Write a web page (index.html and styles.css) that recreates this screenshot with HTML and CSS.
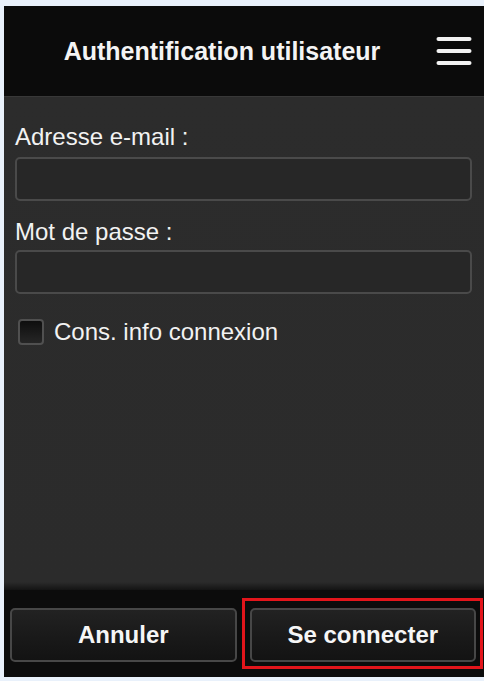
FILE: index.html
```html
<!DOCTYPE html>
<html lang="fr">
<head>
<meta charset="utf-8">
<title>Authentification utilisateur</title>
<link rel="stylesheet" href="styles.css">
</head>
<body>
<div class="frame">
  <header class="topbar">
    <h1 class="title">Authentification utilisateur</h1>
    <svg class="menu" width="36" height="30" viewBox="0 0 36 30" aria-hidden="true">
      <rect x="0.5" y="1" width="35" height="4" rx="2" fill="#f2f2f2"/>
      <rect x="0.5" y="13" width="35" height="4" rx="2" fill="#f2f2f2"/>
      <rect x="0.5" y="25" width="35" height="4" rx="2" fill="#f2f2f2"/>
    </svg>
  </header>
  <main class="content">
    <label class="label" for="email">Adresse e-mail :</label>
    <input class="field" id="email" type="text">
    <label class="label label-2" for="pass">Mot de passe :</label>
    <input class="field" id="pass" type="password">
    <div class="check-row">
      <span class="checkbox"></span>
      <span class="check-text">Cons. info connexion</span>
    </div>
  </main>
  <footer class="bottombar">
    <div class="btn-cell"><button class="btn">Annuler</button></div>
    <div class="btn-cell highlight"><button class="btn">Se connecter</button></div>
  </footer>
</div>
</body>
</html>
```
FILE: styles.css
```css
html, body {
  margin: 0;
  padding: 0;
}
body {
  background: #e9f1fb;
  width: 484px;
  height: 681px;
  overflow: hidden;
  font-family: "Liberation Sans", Arial, sans-serif;
}
.frame {
  margin: 6px 0 0 4px;
  width: 480px;
  height: 671px;
  display: flex;
  flex-direction: column;
  background: #2b2b2b;
}
.topbar {
  box-sizing: border-box;
  height: 91px;
  flex: none;
  display: flex;
  align-items: center;
  padding: 0 12px 0 4px;
  background: #0b0b0b;
  border-bottom: 1px solid #383838;
}
.title {
  flex: 1;
  margin: 0;
  text-align: center;
  color: #f4f4f4;
  font-size: 25px;
  font-weight: bold;
  line-height: 30px;
}
.menu {
  flex: none;
  display: block;
}
.content {
  flex: 1;
  display: flex;
  flex-direction: column;
  padding: 26px 12px 0 11px;
  background: linear-gradient(to bottom, #2c2c2c 0, #2b2b2b calc(100% - 8px), #141414 100%);
}
.label {
  color: #f2f2f2;
  font-size: 24px;
  line-height: 28px;
  margin-bottom: 6px;
}
.label-2 {
  margin-top: 17px;
  margin-bottom: 4px;
}
.field {
  box-sizing: border-box;
  height: 44px;
  width: 457px;
  margin: 0;
  border: 2px solid #4a4a4a;
  border-radius: 5px;
  background: #272727;
  outline: none;
}
.check-row {
  display: flex;
  align-items: center;
  gap: 10px;
  margin-top: 24px;
  padding-left: 3px;
}
.checkbox {
  box-sizing: border-box;
  width: 26px;
  height: 26px;
  border: 2px solid #505050;
  border-radius: 4px;
  background: linear-gradient(to bottom, #0e0e0e, #262626);
}
.check-text {
  color: #f2f2f2;
  font-size: 24px;
  line-height: 28px;
}
.bottombar {
  flex: none;
  height: 87px;
  box-sizing: border-box;
  display: grid;
  grid-template-columns: 1fr 1fr;
  gap: 13px;
  padding: 18px 8px 15px 6px;
  background: #0c0c0c;
}
.btn-cell {
  position: relative;
  display: flex;
}
.btn {
  flex: 1;
  margin: 0;
  border: 2px solid #474747;
  border-radius: 5px;
  background: linear-gradient(to bottom, #222 0, #1a1a1a 50%, #131313 100%);
  color: #f6f6f6;
  font-family: "Liberation Sans", Arial, sans-serif;
  font-size: 24px;
  font-weight: bold;
}
.highlight::after {
  content: "";
  position: absolute;
  top: -10px;
  left: -8px;
  right: -7px;
  bottom: -7px;
  border: 3px solid #e3151b;
  pointer-events: none;
}
```
